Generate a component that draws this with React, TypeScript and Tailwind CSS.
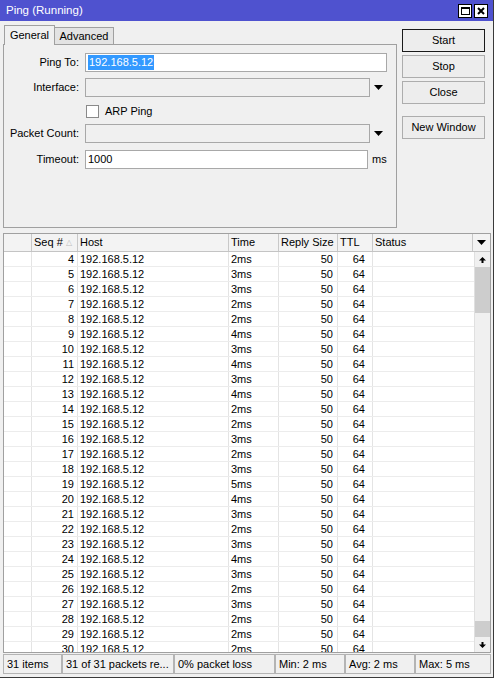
import React from "react";

const times: Record<number, string> = {
  4: "2ms", 5: "3ms", 6: "3ms", 7: "2ms", 8: "2ms", 9: "4ms", 10: "3ms", 11: "4ms", 12: "3ms",
  13: "4ms", 14: "2ms", 15: "2ms", 16: "3ms", 17: "2ms", 18: "3ms", 19: "5ms", 20: "4ms",
  21: "3ms", 22: "2ms", 23: "3ms", 24: "4ms", 25: "3ms", 26: "2ms", 27: "3ms", 28: "2ms",
  29: "2ms", 30: "2ms",
};
const rows = Array.from({ length: 27 }, (_, i) => i + 4);

function Down() {
  return (
    <svg width="9" height="5" viewBox="0 0 9 5">
      <polygon points="0,0 9,0 4.5,5" fill="#000" />
    </svg>
  );
}
function Up() {
  return (
    <svg width="7" height="6" viewBox="0 0 7 6">
      <polygon points="3.5,0 7,3.5 4.5,3.5 4.5,6 2.5,6 2.5,3.5 0,3.5" fill="#000" />
    </svg>
  );
}
function DownArr() {
  return (
    <svg width="7" height="6" viewBox="0 0 7 6">
      <polygon points="2.5,0 4.5,0 4.5,2.5 7,2.5 3.5,6 0,2.5 2.5,2.5" fill="#000" />
    </svg>
  );
}

function Btn({ label, def }: { label: string; def?: boolean }) {
  return (
    <div
      className={`w-[83px] h-[23px] flex items-center justify-center bg-[#ededed] border ${
        def ? "border-[#1a1a1a]" : "border-[#adadad]"
      }`}
    >
      {label}
    </div>
  );
}

export default function App() {
  return (
    <div
      className="w-[494px] h-[678px] bg-[#f0f0f0] border-r border-b border-[#3a3a3a] flex flex-col text-[11px] text-black leading-none overflow-hidden"
      style={{ fontFamily: '"Liberation Sans", Arial, sans-serif' }}
    >
      {/* Title bar */}
      <div className="h-[21px] bg-[#4f52cf] flex items-center pl-[6px] pr-[5px] shrink-0">
        <span className="text-white text-[11.5px] flex-1">Ping (Running)</span>
        <div className="flex gap-[2px]">
          <div className="w-[14px] h-[14px] bg-white border border-black flex items-center justify-center">
            <div className="w-[9px] h-[8px] border border-black border-t-2" />
          </div>
          <div className="w-[14px] h-[14px] bg-white border border-black flex items-center justify-center">
            <svg width="8" height="8" viewBox="0 0 8 8">
              <path d="M1 1 L7 7 M7 1 L1 7" stroke="#000" strokeWidth="2" />
            </svg>
          </div>
        </div>
      </div>

      {/* Top section */}
      <div className="h-[212px] flex shrink-0">
        <div className="pl-[3px] pt-[4px] w-[397px] flex flex-col">
          <div className="flex h-[20px] items-end relative z-10">
            <div className="h-[20px] w-[51px] ml-[1px] border border-b-0 border-[#a0a0a0] bg-[#f0f0f0] flex items-center justify-center">
              General
            </div>
            <div className="h-[17px] w-[59px] border border-l-0 border-b-0 border-[#a0a0a0] bg-[#e3e3e3] flex items-center justify-center mb-[1px]">
              Advanced
            </div>
          </div>
          <div className="h-[184px] -mt-[1px] border border-[#a0a0a0] flex flex-col">
            {/* Ping To */}
            <div className="flex items-center h-[19px] mt-[8px]">
              <div className="w-[75px] text-right">Ping To:</div>
              <div className="ml-[6px] w-[302px] h-[19px] bg-white border border-[#a8a8a8] flex items-center pl-[2px]">
                <span className="bg-[#3399ff] text-white px-[1px] py-[2px]">192.168.5.12</span>
              </div>
            </div>
            {/* Interface */}
            <div className="flex items-center h-[19px] mt-[6px]">
              <div className="w-[75px] text-right">Interface:</div>
              <div className="ml-[6px] w-[285px] h-[19px] bg-[#f0f0f0] border border-[#a8a8a8]" />
              <div className="w-[17px] flex justify-center">
                <Down />
              </div>
            </div>
            {/* ARP Ping */}
            <div className="flex items-center h-[18px] mt-[5px]">
              <div className="w-[82px]" />
              <div className="w-[13px] h-[13px] bg-white border border-[#8a8a8a]" />
              <span className="ml-[6px]">ARP Ping</span>
            </div>
            {/* Packet Count */}
            <div className="flex items-center h-[19px] mt-[4px]">
              <div className="w-[75px] text-right">Packet Count:</div>
              <div className="ml-[6px] w-[285px] h-[19px] bg-[#f0f0f0] border border-[#a8a8a8]" />
              <div className="w-[17px] flex justify-center">
                <Down />
              </div>
            </div>
            {/* Timeout */}
            <div className="flex items-center h-[19px] mt-[7px]">
              <div className="w-[75px] text-right">Timeout:</div>
              <div className="ml-[6px] w-[283px] h-[19px] bg-white border border-[#a8a8a8] flex items-center pl-[2px]">
                1000
              </div>
              <span className="ml-[4px]">ms</span>
            </div>
          </div>
        </div>
        <div className="ml-[5px] pt-[8px] flex flex-col gap-[3px]">
          <Btn label="Start" def />
          <Btn label="Stop" />
          <Btn label="Close" />
          <div className="h-[6px]" />
          <Btn label="New Window" />
        </div>
      </div>

      {/* Table */}
      <div className="ml-[3px] w-[488px] h-[420px] border border-[#a0a0a0] flex flex-col shrink-0 overflow-hidden">
        <div className="h-[18px] flex shrink-0 bg-[#f3f3f3] border-b border-[#c4c4c4]">
          <div className="w-[28px] border-r border-[#c8c8c8]" />
          <div className="w-[46px] border-r border-[#c8c8c8] flex items-center pl-[2px]">
            Seq #<span className="ml-[3px] text-[#c0c0c0] text-[8px]">△</span>
          </div>
          <div className="w-[151px] border-r border-[#c8c8c8] flex items-center pl-[2px]">Host</div>
          <div className="w-[50px] border-r border-[#c8c8c8] flex items-center pl-[2px]">Time</div>
          <div className="w-[59px] border-r border-[#c8c8c8] flex items-center pl-[2px]">Reply Size</div>
          <div className="w-[35px] border-r border-[#c8c8c8] flex items-center pl-[2px]">TTL</div>
          <div className="w-[100px] border-r border-[#c8c8c8] flex items-center pl-[2px]">Status</div>
          <div className="flex-1 flex items-center justify-center">
            <Down />
          </div>
        </div>
        <div className="flex-1 flex min-h-0">
          <div className="flex-1 bg-white flex flex-col overflow-hidden">
            {rows.map((n) => (
              <div key={n} className="h-[15px] shrink-0 flex border-b border-[#ececec]">
                <div className="w-[28px] border-r border-[#e4e4e4]" />
                <div className="w-[46px] border-r border-[#e4e4e4] flex items-center justify-end pr-[3px]">{n}</div>
                <div className="w-[151px] border-r border-[#e4e4e4] flex items-center pl-[2px]">192.168.5.12</div>
                <div className="w-[50px] border-r border-[#e4e4e4] flex items-center pl-[2px]">{times[n]}</div>
                <div className="w-[59px] border-r border-[#e4e4e4] flex items-center justify-end pr-[4px]">50</div>
                <div className="w-[35px] border-r border-[#e4e4e4] flex items-center justify-end pr-[7px]">64</div>
                <div className="flex-1" />
              </div>
            ))}
          </div>
          <div className="w-[16px] bg-[#f0f0f0] flex flex-col border-l border-[#e0e0e0]">
            <div className="h-[15px] flex items-center justify-center">
              <Up />
            </div>
            <div className="h-[46px] bg-[#cdcdcd]" />
            <div className="flex-1" />
            <div className="h-[16px] bg-[#cdcdcd]" />
            <div className="h-[15px] flex items-center justify-center">
              <DownArr />
            </div>
          </div>
        </div>
      </div>

      {/* Status bar */}
      <div className="flex pl-[3px] pt-[1px] h-[22px] shrink-0">
        <div className="w-[59px] h-[20px] border border-[#b4b4b4] flex items-center pl-[3px]">31 items</div>
        <div className="w-[112px] h-[20px] border border-[#b4b4b4] flex items-center pl-[3px]">31 of 31 packets re...</div>
        <div className="w-[101px] h-[20px] border border-[#b4b4b4] flex items-center pl-[3px]">0% packet loss</div>
        <div className="w-[70px] h-[20px] border border-[#b4b4b4] flex items-center pl-[3px]">Min: 2 ms</div>
        <div className="w-[70px] h-[20px] border border-[#b4b4b4] flex items-center pl-[3px]">Avg: 2 ms</div>
        <div className="w-[76px] h-[20px] border border-[#b4b4b4] flex items-center pl-[3px]">Max: 5 ms</div>
      </div>
    </div>
  );
}
